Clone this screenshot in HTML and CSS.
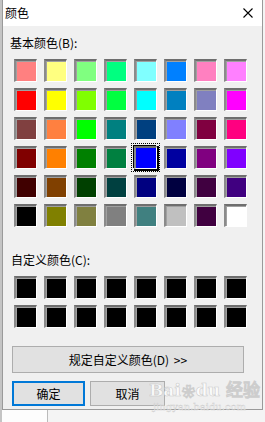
FILE: index.html
```html
<!DOCTYPE html>
<html lang="zh-CN">
<head>
<meta charset="utf-8">
<title>颜色</title>
<link rel="stylesheet" href="styles.css">
</head>
<body>
<div class="page">
  <div class="dialog">
    <div class="titlebar">
      <span class="title">颜色</span>
      <svg class="close" width="10" height="10" viewBox="0 0 10 10"><path d="M0.5 0.5 L9.5 9.5 M9.5 0.5 L0.5 9.5" stroke="#000" stroke-width="1.1" fill="none"/></svg>
    </div>
    <div class="content">
      <div class="label">基本颜色(B):</div>
      <div class="grid">
        <div class="sw" style="background:#ff8080"></div>
        <div class="sw" style="background:#ffff80"></div>
        <div class="sw" style="background:#80ff80"></div>
        <div class="sw" style="background:#00ff80"></div>
        <div class="sw" style="background:#80ffff"></div>
        <div class="sw" style="background:#0080ff"></div>
        <div class="sw" style="background:#ff80c0"></div>
        <div class="sw" style="background:#ff80ff"></div>

        <div class="sw" style="background:#ff0000"></div>
        <div class="sw" style="background:#ffff00"></div>
        <div class="sw" style="background:#80ff00"></div>
        <div class="sw" style="background:#00ff40"></div>
        <div class="sw" style="background:#00ffff"></div>
        <div class="sw" style="background:#0080c0"></div>
        <div class="sw" style="background:#8080c0"></div>
        <div class="sw" style="background:#ff00ff"></div>

        <div class="sw" style="background:#804040"></div>
        <div class="sw" style="background:#ff8040"></div>
        <div class="sw" style="background:#00ff00"></div>
        <div class="sw" style="background:#008080"></div>
        <div class="sw" style="background:#004080"></div>
        <div class="sw" style="background:#8080ff"></div>
        <div class="sw" style="background:#800040"></div>
        <div class="sw" style="background:#ff0080"></div>

        <div class="sw" style="background:#800000"></div>
        <div class="sw" style="background:#ff8000"></div>
        <div class="sw" style="background:#008000"></div>
        <div class="sw" style="background:#008040"></div>
        <div class="sw selected" style="background:#0000ff"></div>
        <div class="sw" style="background:#0000a0"></div>
        <div class="sw" style="background:#800080"></div>
        <div class="sw" style="background:#8000ff"></div>

        <div class="sw" style="background:#400000"></div>
        <div class="sw" style="background:#804000"></div>
        <div class="sw" style="background:#004000"></div>
        <div class="sw" style="background:#004040"></div>
        <div class="sw" style="background:#000080"></div>
        <div class="sw" style="background:#000040"></div>
        <div class="sw" style="background:#400040"></div>
        <div class="sw" style="background:#400080"></div>

        <div class="sw" style="background:#000000"></div>
        <div class="sw" style="background:#808000"></div>
        <div class="sw" style="background:#808040"></div>
        <div class="sw" style="background:#808080"></div>
        <div class="sw" style="background:#408080"></div>
        <div class="sw" style="background:#c0c0c0"></div>
        <div class="sw" style="background:#400040"></div>
        <div class="sw" style="background:#ffffff"></div>
      </div>

      <div class="label label-custom">自定义颜色(C):</div>
      <div class="grid custom">
        <div class="sw black"></div><div class="sw black"></div><div class="sw black"></div><div class="sw black"></div>
        <div class="sw black"></div><div class="sw black"></div><div class="sw black"></div><div class="sw black"></div>
        <div class="sw black"></div><div class="sw black"></div><div class="sw black"></div><div class="sw black"></div>
        <div class="sw black"></div><div class="sw black"></div><div class="sw black"></div><div class="sw black"></div>
      </div>

      <button class="btn wide">规定自定义颜色(D) &gt;&gt;</button>
      <div class="actions">
        <button class="btn default">确定</button>
        <button class="btn">取消</button>
      </div>
      <div class="watermark">Bai<span class="paw">❀</span>du 经验<div class="wm-url">jingyan.baidu.com</div></div>
    </div>
  </div>
  <div class="under"></div>
</div>
</body>
</html>
```

FILE: styles.css
```css
* { box-sizing: border-box; }
html, body { margin: 0; padding: 0; }
body {
  width: 265px;
  height: 422px;
  overflow: hidden;
  background: #f4f4f4;
  font-family: "Noto Sans CJK SC", "Noto Sans", sans-serif;
  font-size: 12px;
  color: #000;
}
.page {
  position: relative;
  height: 422px;
  background: linear-gradient(to right, #c4c4c4 0, #c4c4c4 2px, #f4f4f4 2px);
}
.dialog {
  margin-left: 2px;
  width: 261px;
  height: 410px;
  background: #f0f0f0;
  border-left: 1px solid #9a9a9a;
  border-right: 1px solid #9a9a9a;
  border-bottom: 1px solid #9a9a9a;
  display: flex;
  flex-direction: column;
}
.titlebar {
  height: 26px;
  flex: none;
  background: #fff;
  display: flex;
  align-items: center;
  justify-content: space-between;
  padding: 0 9px 0 2px;
}
.title { font-size: 12px; line-height: 16px; }
.close { display: block; }
.content {
  position: relative;
  padding: 0 8px 0 7px;
  flex: 1;
}
.label {
  margin-top: 9px;
  line-height: 16px;
  height: 16px;
}
.label-custom { margin-top: 25px; padding-left: 1px; }
.grid {
  margin-top: 8px;
  margin-left: 4px;
  display: grid;
  grid-template-columns: repeat(8, 23px);
  grid-auto-rows: 23px;
  column-gap: 7px;
  row-gap: 6px;
}
.sw {
  width: 23px;
  height: 23px;
  border-style: solid;
  border-width: 2px 1px 1px 2px;
  border-color: #6e6e6e #ffffff #ffffff #8a8a8a;
  box-shadow: inset 1px 1px 0 #a0a0a0;
}
.sw.black { background: #000; }
.sw.selected {
  outline: 1px dotted #000;
  outline-offset: 2px;
  box-shadow: 1px 1px 0 1px #000, -1px -1px 0 0 #000;
}
.btn {
  display: block;
  font-family: inherit;
  font-size: 12px;
  color: #000;
  background: #e1e1e1;
  border: 1px solid #adadad;
  padding: 0;
  margin: 0;
  line-height: 16px;
}
.btn.wide {
  margin-top: 18px;
  margin-left: 2px;
  width: 232px;
  height: 27px;
  word-spacing: 2px;
}
.actions {
  margin-top: 8px;
  margin-left: 2px;
  display: flex;
  gap: 5px;
}
.actions .btn { width: 75px; height: 25px; }
.btn.default { width: 73px; border: 2px solid #0078d7; }
.watermark {
  position: absolute;
  left: 146px;
  top: 355px;
  font-family: "DejaVu Serif", serif;
  font-size: 17px;
  font-weight: bold;
  line-height: 18px;
  color: rgba(255,255,255,0.8);
  -webkit-text-stroke: 0.6px rgba(175,175,175,0.6);
  pointer-events: none;
  white-space: nowrap;
}
.paw { font-size: 13px; margin: 0 1px; }
.wm-url {
  font-size: 10px;
  font-weight: normal;
  line-height: 11px;
  -webkit-text-stroke: 0.4px rgba(175,175,175,0.6);
  margin-left: 4px;
}
.under {
  height: 12px;
  margin-left: 2px;
  width: 46px;
  background: #fdfdfd;
  border-right: 1px solid #bbb;
}
```
